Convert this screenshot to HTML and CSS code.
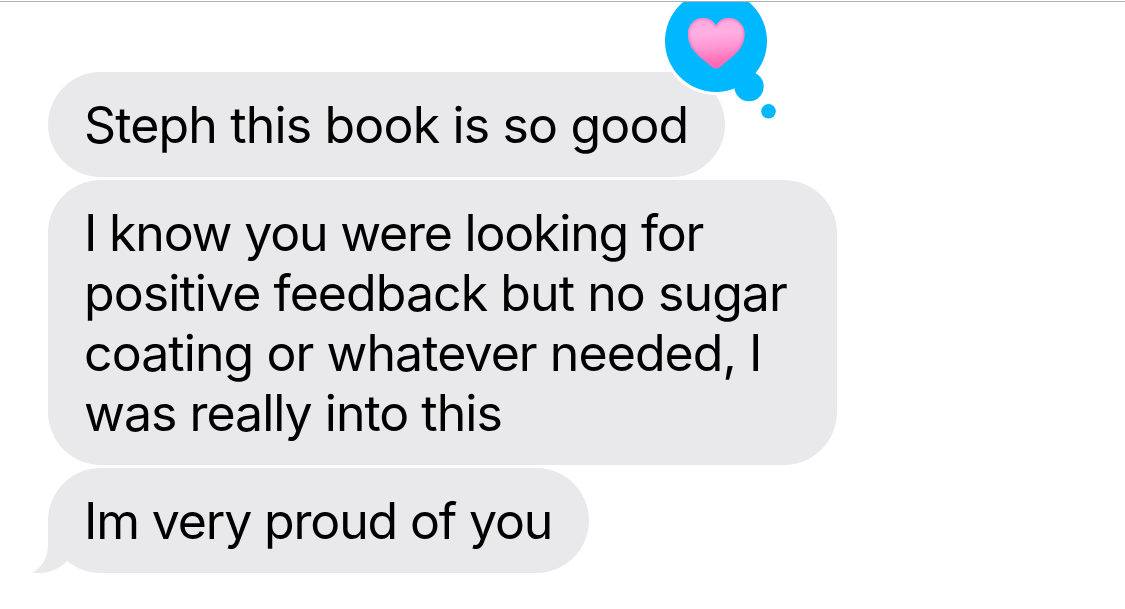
FILE: index.html
```
<!DOCTYPE html>
<html lang="en">
<head>
    <meta charset="UTF-8">
    <meta name="viewport" content="width=device-width, initial-scale=1.0">
    <title>Messages</title>
    <link rel="stylesheet" href="styles.css">
</head>
<body>
    <main class="chat">
        <div class="bubble first">
            <span class="line l1">Steph this book is so good</span>
            <!-- heart reaction -->
            <svg class="reaction" width="120" height="128" viewBox="0 0 120 128">
                <defs>
                    <linearGradient id="pink" x1="0.4" y1="0" x2="0.5" y2="1">
                        <stop offset="0" stop-color="#ffa6de"/>
                        <stop offset="0.3" stop-color="#ffb0e2"/>
                        <stop offset="0.6" stop-color="#ff93d0"/>
                        <stop offset="1" stop-color="#ff55a8"/>
                    </linearGradient>
                    <filter id="soft">
                        <feGaussianBlur stdDeviation="1.3"/>
                    </filter>
                    <clipPath id="heart">
                        <path d="M56 68.500C53 68.500 50 65 45 61C34 53 28 45 28 34C28 25 34 18 43 18C49 18 53.500 21 56 25.500C58.500 21 63 18 69 18C78 18 84.500 25 84.500 34C84.500 45 78 53 67 61C62 65 59 68.500 56 68.500Z"/>
                    </clipPath>
                </defs>
                <g fill="#fff">
                    <circle cx="56" cy="41" r="54"/>
                    <circle cx="89" cy="86.500" r="17"/>
                </g>
                <g fill="#00b8ff">
                    <circle cx="56" cy="41" r="51"/>
                    <circle cx="89" cy="86.500" r="14.700"/>
                    <circle cx="108.500" cy="111.300" r="7.300"/>
                </g>
                <g clip-path="url(#heart)">
                    <rect x="27" y="17" width="58" height="53" fill="url(#pink)"/>
                    <path d="M56 68.500C53 68.500 50 65 45 61C34 53 28 45 28 34C28 25 34 18 43 18C49 18 53.500 21 56 25.500C58.500 21 63 18 69 18C78 18 84.500 25 84.500 34C84.500 45 78 53 67 61C62 65 59 68.500 56 68.500Z" fill="none" stroke="#ee78bd" stroke-width="2.500" filter="url(#soft)"/>
                </g>
            </svg>
        </div>
        <div class="bubble second">
            <span class="line l2">I know you were looking for</span>
            <span class="line l3">positive feedback but no sugar</span>
            <span class="line l4">coating or whatever needed, I</span>
            <span class="line l5">was really into this</span>
        </div>
        <div class="bubble third">
            <span class="line l6">Im very proud of you</span>
            <svg class="tail" width="50" height="50" viewBox="0 0 50 50">
                <path d="M16 0V20C16 34 11 44 0 49.500C12 51.500 26 48 35 38L50 20V0Z" fill="#e9e9eb"/>
            </svg>
        </div>
    </main>
</body>
</html>
```
FILE: styles.css
```
body {
    margin: 0;
    padding-top: 1px;
    background-color: #fff;
    font-family: Inter, "Liberation Sans", sans-serif;
    color: #000;
}
.chat {
    display: flex;
    flex-direction: column;
    align-items: flex-start;
    gap: 3px;
    height: 608px;
    padding: 70px 0 0 48px;
    border-top: 1px solid #b0b0b3;
    box-sizing: border-box;
    overflow: hidden;
}
.bubble {
    position: relative;
    box-sizing: border-box;
    padding: 23px 36px;
    border-radius: 53px;
    background-color: #e9e9eb;
    font-size: 50px;
    line-height: 60px;
}
.first {
    width: 677px;
    height: 105px;
}
.second {
    width: 789px;
    height: 285px;
}
.third {
    width: 541px;
    height: 105px;
}
.line {
    display: block;
    width: max-content;
    white-space: nowrap;
}
.l1 {
    letter-spacing: -0.84px;
}
.l2 {
    letter-spacing: -1.19px;
}
.l3,
.l4 {
    letter-spacing: -0.93px;
}
.l5 {
    letter-spacing: -1px;
}
.l6 {
    letter-spacing: -1.16px;
}
.reaction {
    position: absolute;
    left: 612px;
    top: -72px;
}
.tail {
    position: absolute;
    left: -16px;
    bottom: 0;
}
```
